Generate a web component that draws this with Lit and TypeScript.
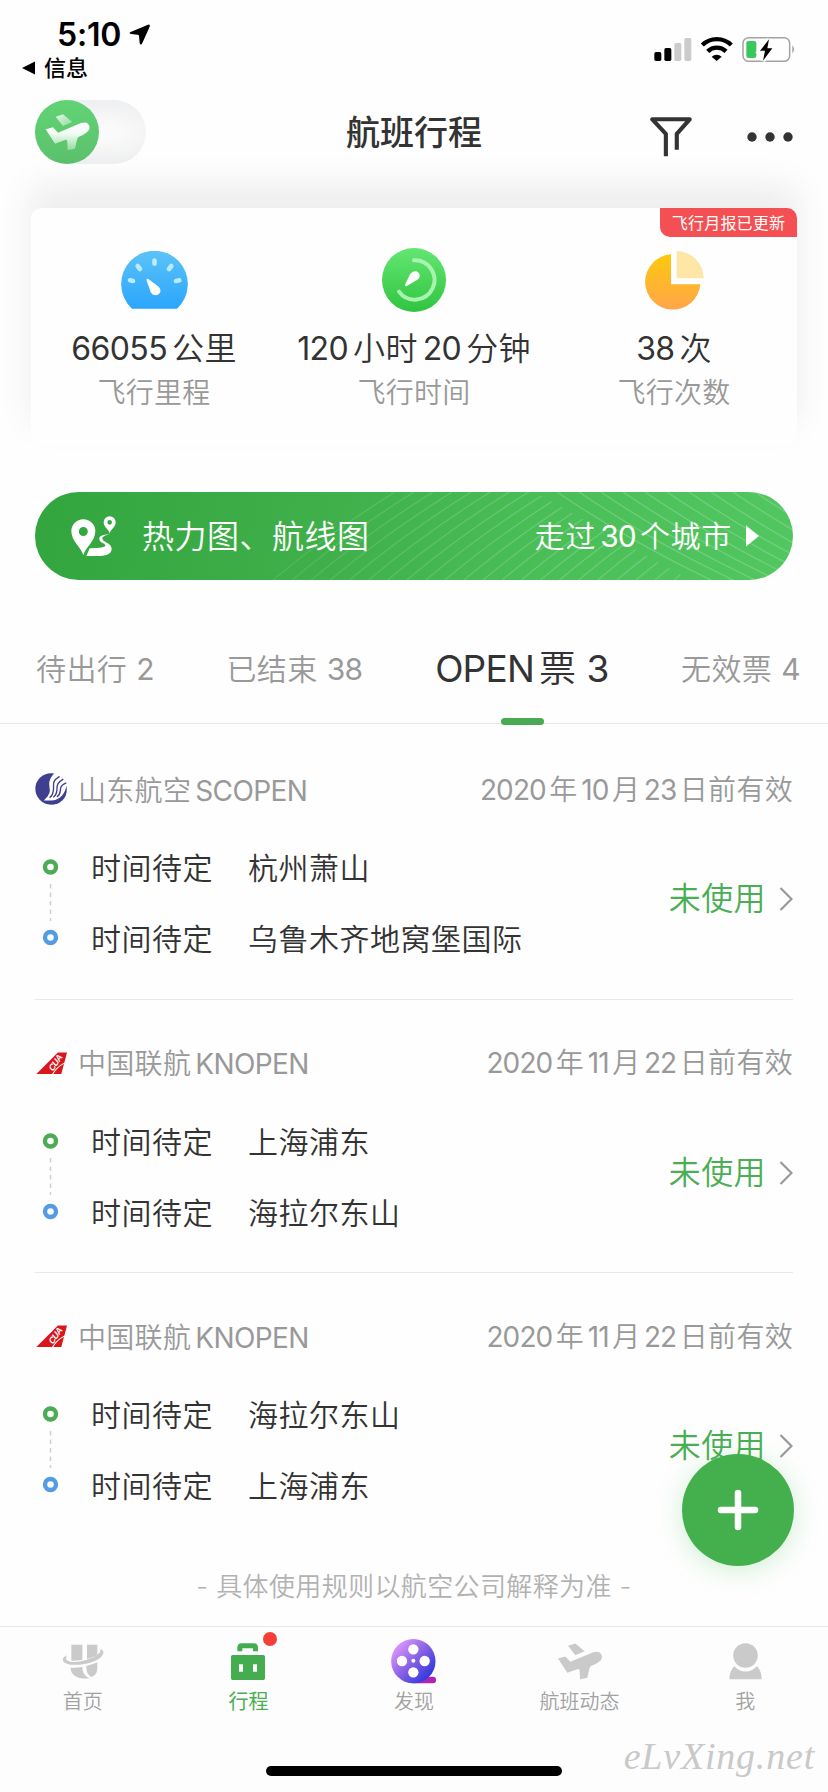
import { LitElement, html, svg, css } from "lit";
import { customElement } from "lit/decorators.js";
import { classMap } from "lit/directives/class-map.js";

/** Splits mixed copy so that Latin and digit runs get their own tracking. */
const mixed = (text: string) =>
  (text.match(/[A-Za-z0-9]+|[^A-Za-z0-9]+/g) ?? []).map((part) =>
    /[A-Za-z0-9]/.test(part) ? html`<span class="n">${part}</span>` : html`<span>${part}</span>`
  );

interface Ticket {
  carrier: "sc" | "kn";
  name: string;
  date: string;
  from: string;
  to: string;
}

const tickets: Ticket[] = [
  { carrier: "sc", name: "山东航空SCOPEN", date: "2020年10月23日前有效", from: "杭州萧山", to: "乌鲁木齐地窝堡国际" },
  { carrier: "kn", name: "中国联航KNOPEN", date: "2020年11月22日前有效", from: "上海浦东", to: "海拉尔东山" },
  { carrier: "kn", name: "中国联航KNOPEN", date: "2020年11月22日前有效", from: "海拉尔东山", to: "上海浦东" },
];

const planeBody = "M138 388 L160 382 L175 398 L242 370 Q268 361 270 384 Q269 398 238 410 Q233 413 232 419 L226 446 L204 451 L203 426 Q203 418 196 420 L166 431 Z";
const planeWing = "M168 350 L190 343 L218 366 L190 378 Z";

const logos = {
  sc: svg`<svg class="logo" viewBox="104 68 95 95">
    <circle cx="151.500" cy="115" r="46.500" fill="#3e3f90"/>
    <path d="M162 68 C140 92 147 103 148 118 C148 132 140 140 130 150 H160 C185 147 196 130 199 116 V66 Z" fill="#fff"/>
    <path d="M177 78 C153 93 160 102 159 116 C158 130 153 138 147 141 M188 86 C167 98 170 107 169 119 C168 131 163 137 158 140 M197 97 C178 105 180 113 179 122 C178 131 174 136 169 139" fill="none" stroke="#3e3f90" stroke-width="4"/>
    <path d="M130 153 C160 153 190 147 197 106 C204 140 180 165 148 161 C140 160 134 157 130 153 Z" fill="#3e3f90"/>
  </svg>`,
  kn: svg`<svg class="logo" viewBox="104 890 95 95">
    <path d="M108 970 L172 906 H199 L182 970 Z" fill="#d8161b"/>
    <path d="M156 971 Q168 950 191 938" fill="none" stroke="#fff" stroke-width="3"/>
    <text class="cua" x="0" y="0" transform="translate(157 964) rotate(-56) skewX(-12)">CUA</text>
  </svg>`,
};

const bannerLines = () => {
  const left = [];
  for (let i = 0; i < 24; i++) {
    const x = 238 + i * 19.1;
    left.push(svg`<path d="M${x} 88 Q${x + 56} 41 ${x + 122} 0"/>`);
  }
  const right = [];
  for (let j = 0; j < 12; j++) {
    const x = 522 + j * 22;
    right.push(svg`<path d="M${x} 0 Q${x + 72} 49 ${x + 154} 88"/>`);
  }
  return svg`<svg class="lines" viewBox="0 0 758 88">
    <defs>
      <clipPath id="hatch"><path d="M0 0 H500 L514 8 L646 83 L655 88 H0 Z"/></clipPath>
      <linearGradient id="fade" gradientUnits="userSpaceOnUse" x1="230" y1="0" x2="520" y2="0">
        <stop offset="0" stop-color="#fff" stop-opacity=".09"/><stop offset="1" stop-color="#fff" stop-opacity=".18"/>
      </linearGradient>
    </defs>
    <g fill="none" stroke="url(#fade)" stroke-width="1.300" clip-path="url(#hatch)">${left}</g>
    <g fill="none" stroke="#fff" stroke-opacity=".2" stroke-width="1.300">${right}</g>
  </svg>`;
};

@customElement("app-root")
export class AppRoot extends LitElement {
  static styles = css`
    :host {
      display: flex;
      flex-direction: column;
      position: relative;
      width: 828px;
      height: 1792px;
      overflow: hidden;
      background: #fefefe;
      color: #333;
      font-family: Inter, "Noto Sans CJK SC", sans-serif;
      font-weight: 350;
      white-space: nowrap;
    }
    * { box-sizing: border-box; }
    svg { display: block; flex: none; }
    .n { font-weight: 400; }
    .status { display: flex; justify-content: space-between; height: 88px; padding: 15px 32px 0 22px; color: #000; }
    .clock { display: flex; align-items: center; gap: 8px; height: 38px; padding-left: 35px; font-size: 32px; font-weight: 600; letter-spacing: -0.2px; }
    .back { display: flex; align-items: center; gap: 9px; height: 30px; font-size: 22px; line-height: 30px; font-weight: 500; }
    .indicators { display: flex; align-items: flex-start; padding-top: 21px; }
    .nav { display: grid; grid-template-columns: 1fr auto 1fr; align-items: center; height: 87px; padding: 0 35px; }
    .toggle { width: 111px; height: 64px; border-radius: 32px; background: radial-gradient(ellipse at 62% 50%, #fafafa 15%, #ebecee 85%); }
    .title { font-size: 34px; font-weight: 500; line-height: 48px; padding-top: 2px; }
    .actions { display: flex; justify-content: flex-end; align-items: center; gap: 55px; padding-top: 11px; }
    .card { position: relative; display: grid; grid-template-columns: repeat(3, 260px); justify-content: center; margin: 33px 31px 0; height: 237px; border-radius: 10px; background: #fefefe; box-shadow: 0 -22px 34px 2px rgba(0, 0, 0, 0.065); }
    .ribbon { position: absolute; top: 0; right: 0; width: 137px; height: 29px; border-radius: 0 10px 0 10px; background: #f45053; color: #fff; font-size: 16px; font-weight: 400; letter-spacing: 0.2px; line-height: 30px; text-align: center; }
    .stat { display: flex; flex-direction: column; align-items: center; padding-top: 36px; }
    .glyph { display: flex; align-items: center; height: 72px; }
    .value { display: flex; font-size: 32px; line-height: 44px; letter-spacing: 0.3px; margin-top: 11px; }
    .value .n { letter-spacing: -0.6px; }
    .n + span, span + .n { margin-left: 5px; }
    .label { font-size: 28px; line-height: 40px; letter-spacing: 0.3px; color: #999; margin-top: 2px; }
    .banner { position: relative; display: flex; align-items: center; margin: 47px 35px 0; height: 88px; padding: 0 34px 0 36px; border-radius: 44px; overflow: hidden; background: linear-gradient(97deg, #33a53e 0%, #3fb04a 40%, #49bd56 65%, #52c660 100%); color: #fff; line-height: 44px; }
    .lines { position: absolute; inset: 0; width: 758px; height: 88px; }
    .heat { flex: 1; font-size: 32px; letter-spacing: 0.5px; margin-left: 26px; padding-top: 1px; }
    .cities { display: flex; font-size: 30px; letter-spacing: 0.7px; margin-right: 14px; }
    .cities .n { letter-spacing: -0.9px; }
    .cities .n + span, .cities span + .n { margin-left: 4px; }
    .tabs { display: flex; align-items: center; justify-content: space-between; height: 144px; padding: 34px 28px 0 36px; border-bottom: 1px solid #e8e8e8; font-size: 30px; line-height: 60px; letter-spacing: 0.4px; color: #999; }
    .tab { position: relative; display: flex; gap: 9px; }
    .tab .n { letter-spacing: -0.6px; }
    .tab.on { font-size: 37px; color: #333; gap: 10px; }
    .tab.on .n { letter-spacing: -0.8px; }
    .tab.on::after { content: ""; position: absolute; left: 50%; bottom: -26px; width: 43px; height: 7px; margin-left: -21px; border-radius: 4px; background: #4aa953; }
    .list { margin: 2px 35px 0; }
    .ticket { height: 273.67px; padding-top: 43px; border-bottom: 1px solid #e9e9e9; }
    .ticket:last-child { border: 0; }
    .head { display: flex; align-items: center; height: 40px; font-size: 28px; line-height: 40px; letter-spacing: 0.3px; color: #999; }
    .head .n { letter-spacing: -0.6px; }
    .head .n + span, .head span + .n { margin-left: 4px; }
    .logo { width: 32px; height: 32px; }
    .name { display: flex; flex: 1; margin-left: 11px; padding-top: 3px; }
    .date { display: flex; padding-top: 1px; }
    .date .n { letter-spacing: -0.9px; }
    .head .date .n + span, .head .date span + .n { margin-left: 3.5px; }
    .route { display: flex; margin-top: 36px; font-size: 30px; letter-spacing: 0.5px; }
    .dots { width: 56px; padding: 14px 0 0 7px; }
    .legs { flex: 1; padding-top: 1px; }
    .leg { display: grid; grid-template-columns: 157px 1fr; line-height: 44px; margin-bottom: 27px; }
    .state { display: flex; align-items: center; gap: 13px; height: 44px; margin-top: 32px; color: #4aae54; font-size: 32px; line-height: 44px; letter-spacing: 0.4px; }
    .note { text-align: center; font-size: 26px; line-height: 40px; letter-spacing: 0.38px; color: #b2b2b2; margin-top: 20px; }
    .bar { position: absolute; left: 0; right: 0; bottom: 0; height: 166px; display: grid; grid-template-columns: repeat(5, 1fr); border-top: 1px solid #e8e8e8; background: #fdfdfd; }
    .item { display: flex; flex-direction: column; align-items: center; font-size: 20px; line-height: 28px; color: #a2a2a2; padding-top: 8px; }
    .item.on { color: #4aae54; font-weight: 400; }
    .pic { position: relative; display: flex; align-items: center; justify-content: center; width: 60px; height: 52px; margin-bottom: 1px; }
    .dot { position: absolute; top: -3px; right: 1px; width: 14px; height: 14px; border-radius: 50%; background: #f53f36; }
    .home { position: absolute; left: 266px; bottom: 16px; width: 296px; height: 10px; border-radius: 5px; background: #000; }
    .mark { position: absolute; right: 13px; bottom: 14px; font: italic 38px "Liberation Serif", serif; letter-spacing: 0.8px; color: #c9c9c9; }
    .fab { position: absolute; left: 682px; top: 1454px; width: 112px; height: 112px; border-radius: 50%; background: #43b04d; box-shadow: 0 4px 26px rgba(67, 190, 80, 0.25); display: grid; place-items: center; }
    .cua { font: 700 26px "Liberation Sans", sans-serif; fill: #fff; letter-spacing: -2px; }
  `;

  private renderStatus() {
    return html`<div class="status">
      <div>
        <div class="clock">5:10
          <svg width="21" height="21" viewBox="386 73 63 63"><path d="M391 97 L443 75 Q450 73 448 81 L425 132 Q420 138 418 130 L416 108 Q415 105 412 105 L392 103 Q384 101 391 97 Z"/></svg>
        </div>
        <div class="back">
          <svg width="13" height="14" viewBox="0 0 13 14"><path d="M13 0.500 V13.500 L0 7 Z"/></svg>信息
        </div>
      </div>
      <div class="indicators">
        <svg width="142" height="27" viewBox="716 108 426 81">
          <rect x="717" y="156" width="21" height="27" rx="5"/><rect x="747" y="144" width="21" height="39" rx="5"/>
          <rect x="777" y="129" width="21" height="54" rx="5" fill="#cbcbcb"/><rect x="807" y="114" width="21" height="69" rx="5" fill="#cbcbcb"/>
          <path d="M861 135 A62 62 0 0 1 948 135 M877 154 A40 40 0 0 1 932 154" fill="none" stroke="#000" stroke-width="13"/>
          <path d="M889 170 A22 22 0 0 1 919 170 L904 183 Z"/>
          <rect x="983" y="113" width="140" height="71" rx="17" fill="none" stroke="#a3a3a3" stroke-width="4.500"/>
          <rect x="993" y="123" width="30" height="51" rx="7" fill="#3ac75b"/>
          <path d="M1061 118 L1034 152 H1049 L1043 182 L1071 145 H1056 Z" stroke="#fefefe" stroke-width="14"/>
          <path d="M1061 118 L1034 152 H1049 L1043 182 L1071 145 H1056 Z"/>
          <path d="M1131 136 Q1142 148 1131 161 Z" fill="#a3a3a3"/>
        </svg>
      </div>
    </div>`;
  }

  private renderNav() {
    return html`<div class="nav">
      <div class="toggle">
        <svg width="64" height="64" viewBox="106 300 192 192">
          <defs>
            <linearGradient id="kn" x1="0" y1="0" x2="0" y2="1"><stop offset="0" stop-color="#62d475"/><stop offset="1" stop-color="#5bc06c"/></linearGradient>
            <linearGradient id="pl" gradientUnits="userSpaceOnUse" x1="0" y1="365" x2="0" y2="455"><stop offset="0" stop-color="#fff"/><stop offset=".4" stop-color="#f2fbf3"/><stop offset="1" stop-color="#8bd899"/></linearGradient>
            <linearGradient id="pw" x1="1" y1="1" x2="0" y2="0"><stop offset="0" stop-color="#90da9c"/><stop offset="1" stop-color="#e4f7e7"/></linearGradient>
          </defs>
          <circle cx="202" cy="396" r="96" fill="url(#kn)"/>
          <path d=${planeWing} fill="url(#pw)"/><path d=${planeBody} fill="url(#pl)"/>
        </svg>
      </div>
      <div class="title">航班行程</div>
      <div class="actions">
        <svg width="42" height="42" viewBox="709 348 127 125"><path d="M757 469 V401 L716 357 H829 L790 401 V449" fill="none" stroke="#333" stroke-width="12.500" stroke-linejoin="round"/></svg>
        <svg width="46" height="10" viewBox="0 0 46 10"><circle cx="5" cy="5" r="4.700" fill="#333"/><circle cx="23" cy="5" r="4.700" fill="#333"/><circle cx="41" cy="5" r="4.700" fill="#333"/></svg>
      </div>
    </div>`;
  }

  private renderCard() {
    const gauge = svg`<svg width="67" height="58" viewBox="363 182 201 174">
      <defs><linearGradient id="gb" x1="0" y1="0" x2="0" y2="1"><stop offset="0" stop-color="#5cc3f7"/><stop offset="1" stop-color="#2ba5fd"/></linearGradient></defs>
      <path d="M396 355 A100 100 0 1 1 531 355 Z" fill="url(#gb)"/>
      <path d="M463.500 211 V220 M413 227 L420 236 M514 227 L507 236 M390 270 L399 272 M538 270 L528 272" stroke="#b6ecfd" stroke-width="14" stroke-linecap="round"/>
      <path d="M439 268 Q443 263 448 268 L476 289 Q485 299 479 309 Q470 319 457 312 Q450 306 450 299 Z" fill="#fff"/></svg>`;
    const timer = svg`<svg width="64" height="64" viewBox="24 24 192 192">
      <defs><linearGradient id="gt" x1="0" y1="0" x2="0" y2="1"><stop offset="0" stop-color="#63e673"/><stop offset="1" stop-color="#31c43f"/></linearGradient></defs>
      <circle cx="120" cy="120" r="96" fill="url(#gt)"/>
      <path d="M120 61 A59 59 0 1 1 75 155" fill="none" stroke="#a9f3b0" stroke-width="12" stroke-linecap="round"/>
      <path d="M93 134 L108 103 Q115 92 127 94 Q139 99 137 110 Q136 116 129 120 L98 138 Q92 140 93 134 Z" fill="#fff"/></svg>`;
    const pie = svg`<svg width="59" height="59" viewBox="692 182 177 177">
      <defs><linearGradient id="gp" x1="0" y1="0" x2="0" y2="1"><stop offset="0" stop-color="#fdc90c"/><stop offset="1" stop-color="#ffa54b"/></linearGradient></defs>
      <path d="M770 192 A83 83 0 1 0 858 282 H770 Z" fill="url(#gp)"/>
      <path d="M787 182 A82 82 0 0 1 868 264 H787 Z" fill="#fde6a6"/></svg>`;
    const stats = [
      { icon: gauge, value: "66055公里", label: "飞行里程" },
      { icon: timer, value: "120小时20分钟", label: "飞行时间" },
      { icon: pie, value: "38次", label: "飞行次数" },
    ];
    return html`<div class="card">
      ${stats.map((s) => html`<div class="stat"><div class="glyph">${s.icon}</div><div class="value">${mixed(s.value)}</div><div class="label">${s.label}</div></div>`)}
      <div class="ribbon">飞行月报已更新</div>
    </div>`;
  }

  private renderBanner() {
    return html`<div class="banner">
      ${bannerLines()}
      <svg width="45" height="40" viewBox="214 138 135 120">
        <path fill="#fff" fill-rule="evenodd" d="M251 256 C246 234 215 214 215 184 A36 36 0 0 1 287 184 C287 214 256 234 251 256 Z M251 171 A13.500 13.500 0 1 0 251 198 A13.500 13.500 0 1 0 251 171 Z"/>
        <path fill="#fff" fill-rule="evenodd" d="M330 191 C328 178 312 172 312 157 A18 18 0 0 1 348 157 C348 172 332 178 330 191 Z M330 150 A7 7 0 1 0 330 164 A7 7 0 1 0 330 150 Z"/>
        <path fill="#fff" d="M329 193 C308 194 298 198 299 208 C300 220 318 220 317 227 C316 234 285 233 270 235 L260 258 H300 C326 257 336 248 336 236 C335 218 308 215 308 206 C308 200 318 196 329 193 Z"/>
      </svg>
      <div class="heat">热力图、航线图</div>
      <div class="cities">${mixed("走过30个城市")}</div>
      <svg width="13" height="22" viewBox="0 0 13 22"><path d="M0 0.500 L13 11 L0 21.500 Z" fill="#fff"/></svg>
    </div>`;
  }

  private renderTabs() {
    const tabs = [["待出行", "2"], ["已结束", "38"], ["OPEN票", "3"], ["无效票", "4"]];
    return html`<div class="tabs">
      ${tabs.map(([name, count], i) => html`<div class=${classMap({ tab: true, on: i === 2 })}><div>${mixed(name)}</div><div class="n">${count}</div></div>`)}
    </div>`;
  }

  private renderTicket(t: Ticket) {
    return html`<div class="ticket">
      <div class="head">${logos[t.carrier]}<div class="name">${mixed(t.name)}</div><div class="date">${mixed(t.date)}</div></div>
      <div class="route">
        <div class="dots">
          <svg width="17" height="87" viewBox="0 0 17 87" fill="none">
            <circle cx="8.500" cy="8" r="5.500" stroke="#4dab56" stroke-width="4.400"/>
            <path d="M8.500 25 V62" stroke="#cfcfcf" stroke-width="1.500" stroke-dasharray="4.500 4"/>
            <circle cx="8.500" cy="78.500" r="5.500" stroke="#539be3" stroke-width="4.400"/>
          </svg>
        </div>
        <div class="legs">
          <div class="leg"><span>时间待定</span><span>${t.from}</span></div>
          <div class="leg"><span>时间待定</span><span>${t.to}</span></div>
        </div>
        <div class="state">未使用
          <svg width="14" height="24" viewBox="0 0 14 24"><path d="M1.500 1 L12.500 12 L1.500 23" fill="none" stroke="#999" stroke-width="2.200"/></svg>
        </div>
      </div>
    </div>`;
  }

  private renderBar() {
    const home = svg`<svg width="42" height="35" viewBox="182 250 126 105" fill="#cacaca">
      <path d="M210 252 H243 V297 Q226 301 210 300 Z M257 252 H288 V283 Q273 291 257 295 Z"/>
      <path d="M197 284 C178 292 179 308 208 312 C250 316 302 300 306 277 C307 269 301 265 296 267 C304 278 270 297 232 303 C202 307 188 298 197 284 Z"/>
      <path d="M208 321 Q226 322 243 319 C243 335 250 347 265 353 C232 357 208 345 208 321 Z M255 316 Q273 312 288 305 V323 C288 338 280 346 270 349 C258 343 255 330 255 316 Z"/></svg>`;
    const trips = svg`<svg width="34" height="37" viewBox="693 246 102 111" fill="#44ad4f">
      <path fill-rule="evenodd" d="M698 282 H790 Q795 282 795 287 V352 Q795 357 790 357 H698 Q693 357 693 352 V287 Q693 282 698 282 Z M717 310 V332 H729 V310 Z M759 310 V332 H771 V310 Z"/>
      <path d="M712 271 V260 Q712 247 725 247 H761 Q774 247 774 260 V271 H759 V262 H727 V271 Z"/></svg>`;
    const film = svg`<svg width="45" height="45" viewBox="1173 239 135 135">
      <defs><linearGradient id="gf" x1=".05" y1=".15" x2=".85" y2=".9"><stop offset="0" stop-color="#e29bff"/><stop offset=".5" stop-color="#8a62e4"/><stop offset="1" stop-color="#2c37dc"/></linearGradient></defs>
      <rect x="1230" y="352" width="78" height="20" rx="9" fill="#ad24b6"/>
      <circle cx="1240" cy="305.500" r="66.500" fill="url(#gf)"/>
      <g fill="#fff"><circle cx="1240" cy="270" r="15.500"/><circle cx="1206" cy="305" r="15.500"/><circle cx="1274" cy="305" r="15.500"/><circle cx="1240" cy="339" r="15.500"/><circle cx="1240" cy="304" r="6"/></g></svg>`;
    const plane = svg`<svg width="44" height="37" viewBox="138 342 132 110" fill="#cacaca"><path d=${planeWing}/><path d=${planeBody}/></svg>`;
    const me = svg`<svg width="33" height="37" viewBox="941 788 98 110" fill="#cacaca"><circle cx="990" cy="825" r="36.500"/>
      <path d="M942 896 C942 880 948 865 957 857 C975 878 1005 878 1024 857 C1033 865 1038 880 1038 896 Z"/></svg>`;
    const items = [
      { icon: home, label: "首页" },
      { icon: trips, label: "行程", on: true },
      { icon: film, label: "发现" },
      { icon: plane, label: "航班动态" },
      { icon: me, label: "我" },
    ];
    return html`<div class="bar">
      ${items.map((it) => html`<div class=${classMap({ item: true, on: !!it.on })}><div class="pic">${it.icon}${it.on ? html`<i class="dot"></i>` : ""}</div>${it.label}</div>`)}
      <div class="home"></div>
      <div class="mark">eLvXing.net</div>
    </div>`;
  }

  render() {
    return html`${this.renderStatus()}${this.renderNav()}${this.renderCard()}${this.renderBanner()}${this.renderTabs()}
      <div class="list">${tickets.map((t) => this.renderTicket(t))}</div>
      <div class="note">- 具体使用规则以航空公司解释为准 -</div>
      ${this.renderBar()}
      <div class="fab"><svg width="42" height="42" viewBox="0 0 42 42"><path d="M21 4 V38 M4 21 H38" stroke="#fff" stroke-width="6.500" stroke-linecap="round"/></svg></div>`;
  }
}
